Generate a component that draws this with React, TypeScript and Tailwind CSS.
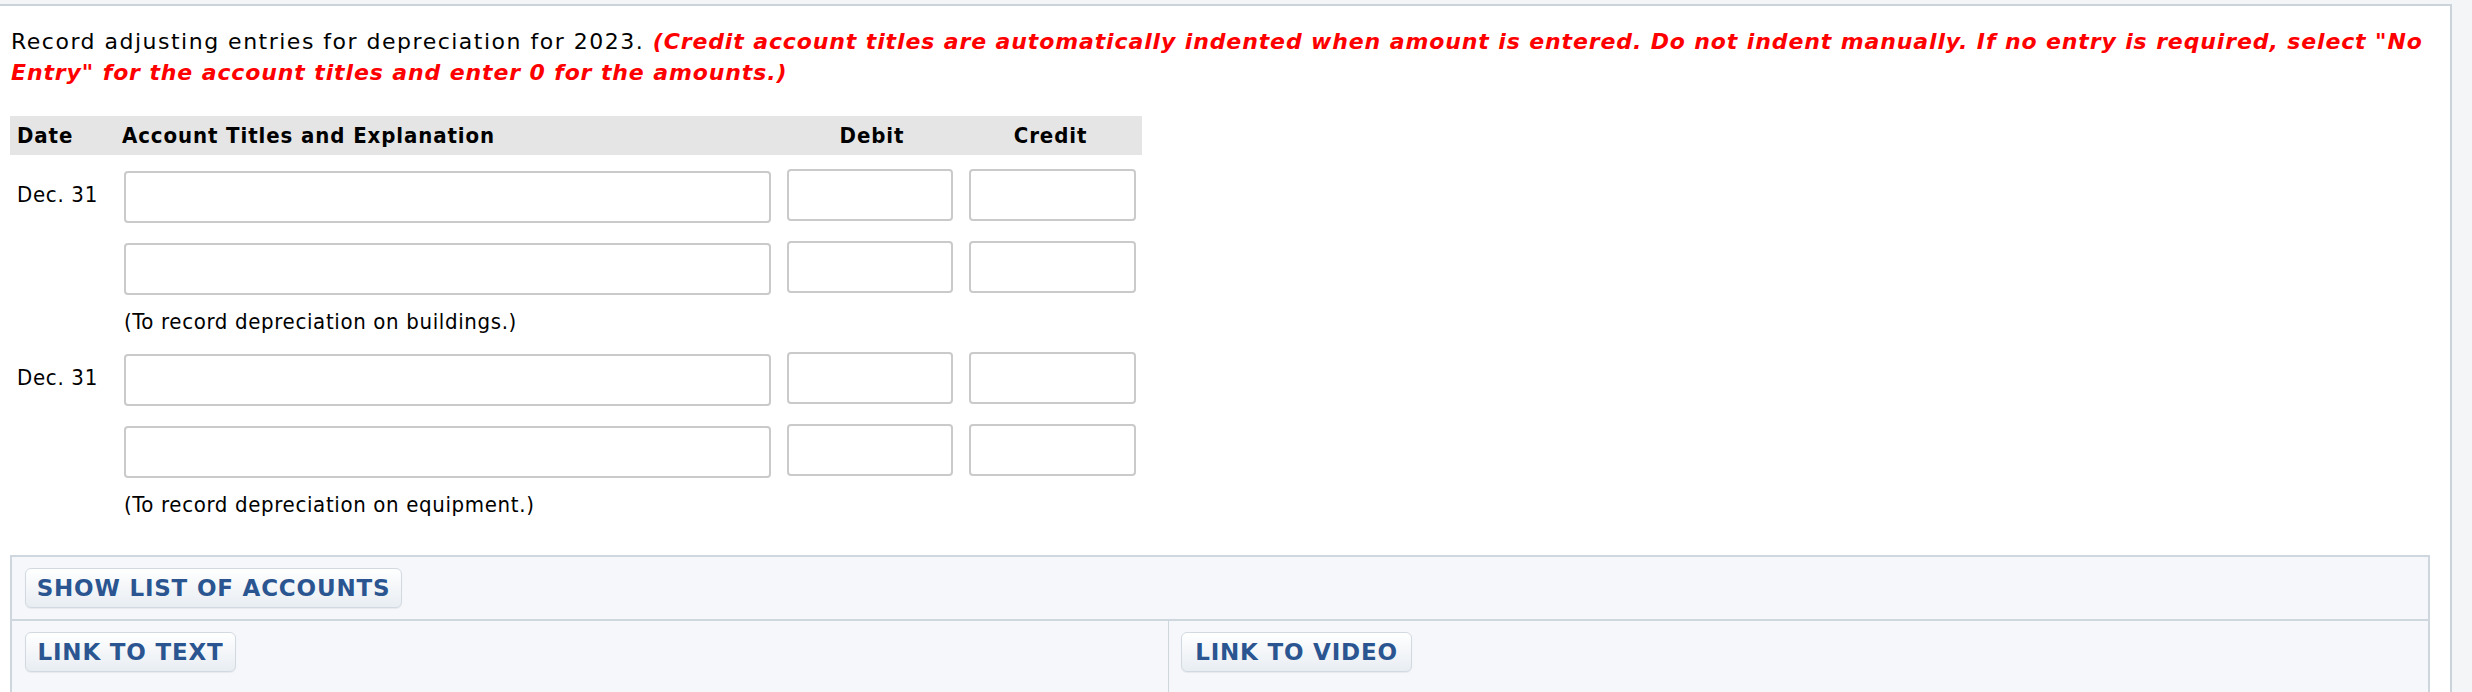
import React from "react";

const verdana = { fontFamily: "'DejaVu Sans', Verdana, sans-serif" };
const tahoma = { fontFamily: "'DejaVu Sans Condensed', 'Noto Sans', sans-serif" };

function Row({ date }: { date?: string }) {
  return (
    <div className="flex h-[72px]">
      <div className="w-[114px] pl-[7px] pt-[27px] text-[22px] leading-[26px] tracking-[0.7px] text-black" style={tahoma}>
        {date}
      </div>
      <div className="w-[655px]">
        <div className="w-[647px] mt-[16px] h-[52px] rounded-[4px] border-2 border-[#cacaca] bg-white" />
      </div>
      <div className="w-[182px] pl-[8px]">
        <div className="w-[166px] mt-[14px] h-[52px] rounded-[4px] border-2 border-[#cacaca] bg-white" />
      </div>
      <div className="w-[181px] pl-[8px]">
        <div className="w-[167px] mt-[14px] h-[52px] rounded-[4px] border-2 border-[#cacaca] bg-white" />
      </div>
    </div>
  );
}

function Entry({ note }: { note: string }) {
  return (
    <div>
      <Row date="Dec. 31" />
      <Row />
      <div className="h-[39px] pl-[114px] pt-[10px] text-[22px] leading-[26px] tracking-[0.65px] text-black" style={tahoma}>
        {note}
      </div>
    </div>
  );
}

function Btn({ label, w }: { label: string; w: string }) {
  return (
    <button
      className={`${w} h-[40px] rounded-[6px] border border-[#d2d9e1] bg-gradient-to-b from-white to-[#e8edf2] text-center text-[23px] font-bold leading-none tracking-[0.8px] text-[#2a5591] shadow-[0_1px_1px_rgba(0,0,0,0.06)]`}
      style={verdana}
    >
      {label}
    </button>
  );
}

export default function App() {
  return (
    <div className="flex h-[692px] w-[2472px] overflow-hidden bg-[#f3f5f7]">
      <div className="mt-[4px] w-[2452px] border-t-2 border-r-2 border-[#ccd4db] bg-white">
        <p className="pl-[11px] pr-[10px] pt-[20px] text-[22px] leading-[31px] tracking-[1.5px] text-black" style={verdana}>
          Record adjusting entries for depreciation for 2023.{" "}
          <span className="font-bold italic tracking-[0.88px] text-[#ff0000]">
            (Credit account titles are automatically indented when amount is entered. Do not indent manually. If
            no entry is required, select "No Entry" for the account titles and enter 0 for the amounts.)
          </span>
        </p>

        <div className="ml-[10px] mt-[28px] w-[1132px]">
          <div
            className="flex h-[39px] items-center bg-[#e5e5e5] text-[22px] font-bold tracking-[0.9px] text-black"
            style={tahoma}
          >
            <div className="w-[114px] pl-[7px]">Date</div>
            <div className="w-[655px] -ml-[2px]">Account Titles and Explanation</div>
            <div className="w-[182px] pl-[8px] text-center">Debit</div>
            <div className="w-[181px] pl-[8px] pr-[6px] text-center">Credit</div>
          </div>
          <Entry note="(To record depreciation on buildings.)" />
          <Entry note="(To record depreciation on equipment.)" />
        </div>

        <div className="ml-[10px] mt-[34px] w-[2420px] border-2 border-[#cfd7de] bg-[#f5f7fa]">
          <div className="h-[64px] border-b-2 border-[#cfd7de] pl-[13px] pt-[11px]">
            <Btn label="SHOW LIST OF ACCOUNTS" w="w-[377px]" />
          </div>
          <div className="flex h-[80px]">
            <div className="w-[1157px] border-r border-[#cfd7de] pl-[13px] pt-[11px]">
              <Btn label="LINK TO TEXT" w="w-[211px]" />
            </div>
            <div className="flex-1 pl-[12px] pt-[11px]">
              <Btn label="LINK TO VIDEO" w="w-[231px]" />
            </div>
          </div>
        </div>
      </div>
    </div>
  );
}
